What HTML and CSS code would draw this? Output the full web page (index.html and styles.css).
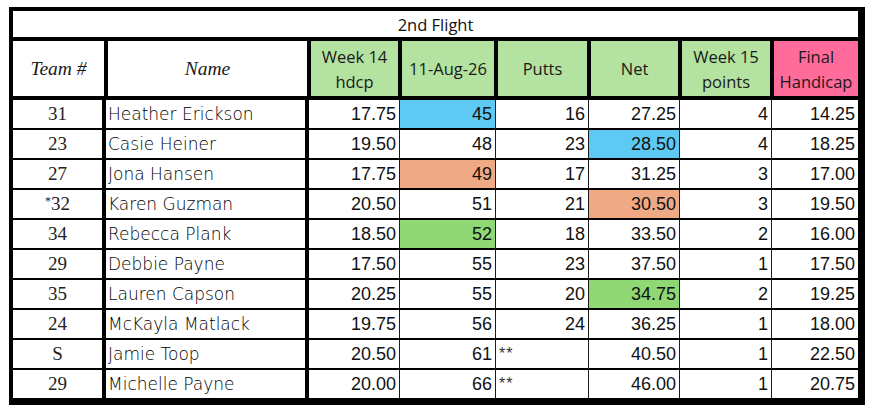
FILE: index.html
```html
<!DOCTYPE html>
<html>
<head>
<meta charset="utf-8">
<title>2nd Flight</title>
<link rel="stylesheet" href="styles.css">
</head>
<body>
<div class="page">
<table class="flight">
  <colgroup>
    <col class="c-team"><col class="c-name"><col class="c-wk14"><col class="c-date">
    <col class="c-putts"><col class="c-net"><col class="c-wk15"><col class="c-final">
  </colgroup>
  <thead>
    <tr class="title-row"><th colspan="8">2nd Flight</th></tr>
    <tr class="head-row">
      <th class="h-script">Team #</th>
      <th class="h-script">Name</th>
      <th class="h-green">Week 14<br>hdcp</th>
      <th class="h-green">11-Aug-26</th>
      <th class="h-green">Putts</th>
      <th class="h-green">Net</th>
      <th class="h-green">Week 15<br>points</th>
      <th class="h-pink">Final<br>Handicap</th>
    </tr>
  </thead>
  <tbody>
    <tr><td class="team">31</td><td class="name">Heather Erickson</td><td class="num">17.75</td><td class="num hl-blue">45</td><td class="num">16</td><td class="num">27.25</td><td class="num">4</td><td class="num">14.25</td></tr>
    <tr><td class="team">23</td><td class="name">Casie Heiner</td><td class="num">19.50</td><td class="num">48</td><td class="num">23</td><td class="num hl-blue">28.50</td><td class="num">4</td><td class="num">18.25</td></tr>
    <tr><td class="team">27</td><td class="name">Jona Hansen</td><td class="num">17.75</td><td class="num hl-orange">49</td><td class="num">17</td><td class="num">31.25</td><td class="num">3</td><td class="num">17.00</td></tr>
    <tr><td class="team"><span class="star">*</span>32</td><td class="name">Karen Guzman</td><td class="num">20.50</td><td class="num">51</td><td class="num">21</td><td class="num hl-orange">30.50</td><td class="num">3</td><td class="num">19.50</td></tr>
    <tr><td class="team">34</td><td class="name">Rebecca Plank</td><td class="num">18.50</td><td class="num hl-green">52</td><td class="num">18</td><td class="num">33.50</td><td class="num">2</td><td class="num">16.00</td></tr>
    <tr><td class="team">29</td><td class="name">Debbie Payne</td><td class="num">17.50</td><td class="num">55</td><td class="num">23</td><td class="num">37.50</td><td class="num">1</td><td class="num">17.50</td></tr>
    <tr><td class="team">35</td><td class="name">Lauren Capson</td><td class="num">20.25</td><td class="num">55</td><td class="num">20</td><td class="num hl-green">34.75</td><td class="num">2</td><td class="num">19.25</td></tr>
    <tr><td class="team">24</td><td class="name">McKayla Matlack</td><td class="num">19.75</td><td class="num">56</td><td class="num">24</td><td class="num">36.25</td><td class="num">1</td><td class="num">18.00</td></tr>
    <tr><td class="team">S</td><td class="name">Jamie Toop</td><td class="num">20.50</td><td class="num">61</td><td class="note">**</td><td class="num">40.50</td><td class="num">1</td><td class="num">22.50</td></tr>
    <tr><td class="team">29</td><td class="name">Michelle Payne</td><td class="num">20.00</td><td class="num">66</td><td class="note">**</td><td class="num">46.00</td><td class="num">1</td><td class="num">20.75</td></tr>
  </tbody>
</table>
</div>
</body>
</html>
```

FILE: styles.css
```css
body {
  margin: 0;
  background: #ffffff;
}

.page {
  padding: 7px 0 0 9px;
}

.flight {
  border-collapse: separate;
  border-spacing: 0;
  table-layout: fixed;
  width: 856px;
  border-style: solid;
  border-color: #000;
  border-width: 4px 7px 7px 4px;
  color: #111;
}

.c-team { width: 93px; }
.c-name { width: 203px; }
.c-wk14 { width: 91px; }
.c-date { width: 96px; }
.c-putts { width: 93px; }
.c-net { width: 91px; }
.c-wk15 { width: 92px; }
.c-final { width: 86px; }

.flight th,
.flight td {
  padding: 0;
  box-sizing: border-box;
  overflow: hidden;
  white-space: nowrap;
}

.title-row th {
  height: 30px;
  border-bottom: 4px solid #000;
  font-family: "Open Sans", "Liberation Sans", sans-serif;
  font-size: 16.5px;
  font-weight: 400;
  text-align: center;
  vertical-align: middle;
  color: #111;
}

.head-row th {
  height: 59px;
  border-bottom: 4px solid #000;
  border-left: 2px solid #000;
  border-right: 2px solid #000;
  text-align: center;
  vertical-align: middle;
  font-family: "Open Sans", "Liberation Sans", sans-serif;
  font-size: 16.5px;
  font-weight: 400;
  line-height: 25px;
  color: #1a1a1a;
}

.head-row th:first-child { border-left: 0; }
.head-row th:last-child { border-right: 0; }

.head-row .h-script {
  font-family: "Liberation Serif", serif;
  font-style: italic;
  font-weight: 400;
  font-size: 19.5px;
  background: #ffffff;
}

.h-green { background: #b4e2a0; }
.h-pink { background: #ff6b9a; }

.flight tbody td {
  height: 30px;
  border-bottom: 2px solid #000;
  border-right: 1px solid #1c1c1c;
  vertical-align: middle;
}

.flight tbody tr:last-child td {
  height: 28px;
  border-bottom: 0;
}

.flight tbody td:last-child { border-right: 0; }

.flight tbody td.team,
.flight tbody td.name {
  border-right: 4px solid #000;
}

.team {
  text-align: center;
  font-family: "Liberation Serif", serif;
  font-size: 19px;
  color: #222;
}

.star {
  font-size: 12px;
  vertical-align: 5px;
}

.name {
  text-align: left;
  padding-left: 2px !important;
  font-family: "DejaVu Sans", sans-serif;
  font-weight: 200;
  font-size: 17px;
  color: #000;
}

.num {
  text-align: right;
  padding-right: 3px !important;
  font-family: "Liberation Sans", Arial, sans-serif;
  font-size: 18px;
  color: #111;
}

.note {
  text-align: left;
  padding-left: 3px !important;
  font-family: "Liberation Sans", Arial, sans-serif;
  font-size: 16px;
  letter-spacing: 1px;
  color: #333;
}

.hl-blue { background: #5ec9f2; }
.hl-orange { background: #f0a985; }
.hl-green { background: #8fd874; }
```
